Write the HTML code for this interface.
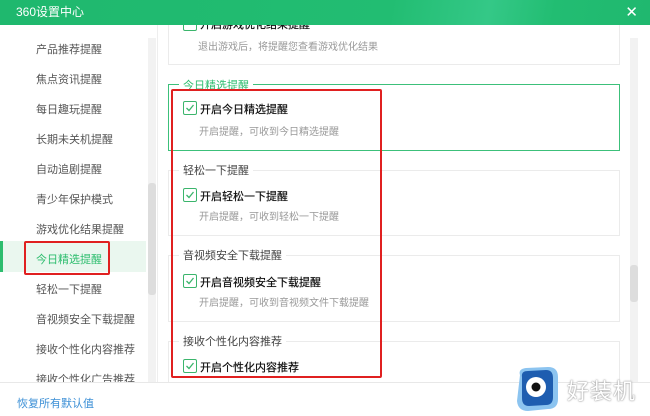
<!DOCTYPE html>
<html><head><meta charset="utf-8"><style>
*{margin:0;padding:0;box-sizing:border-box}
body{width:650px;height:416px;overflow:hidden;background:#fff;font-family:"Liberation Sans","Noto Sans CJK SC",sans-serif;position:relative}
.abs{position:absolute}
.title{left:0;top:0;width:650px;height:25px;background:linear-gradient(100deg,#1fb86e 0%,#22bd72 60%,#34c887 75%,#22bd72 85%,#20b86f 100%);color:#fff;font-size:12px;line-height:25px;padding-left:16px;z-index:5}
.side{font-size:11px;color:#555;left:36px}
.fs{border:1px solid #ebebeb;left:168px;width:452px}
.leg{font-size:11px;color:#444;background:#fff;padding:0 4px}
.cb{width:14px;height:14px;border:1px solid #3bb56c;border-radius:2px;background:#fff}
.cb svg{position:absolute;left:1px;top:1px}
.lbl{font-size:11px;color:#111;text-shadow:0 0 0.4px #111}
.desc{font-size:10px;color:#999}
</style></head><body>
<div class="abs title">360设置中心</div>
<div class="abs" style="right:12px;top:3px;color:#fff;font-size:15px;z-index:6">✕</div>
<div class="abs" style="left:0;top:25px;width:158px;height:357px;background:#fff;border-right:1px solid #eee"></div>
<div class="abs" style="left:148px;top:38px;width:8px;height:345px;background:#f2f2f2"></div>
<div class="abs" style="left:148px;top:183px;width:8px;height:112px;background:#ddd;border-radius:3px"></div>
<div class="abs" style="left:0;top:241px;width:146px;height:31px;background:#eaf7ef"></div>
<div class="abs" style="left:0;top:241px;width:3px;height:31px;background:#2dbd6e"></div>
<div class="abs side" style="top:41px">产品推荐提醒</div>
<div class="abs side" style="top:71px">焦点资讯提醒</div>
<div class="abs side" style="top:101px">每日趣玩提醒</div>
<div class="abs side" style="top:131px">长期未关机提醒</div>
<div class="abs side" style="top:161px">自动追剧提醒</div>
<div class="abs side" style="top:191px">青少年保护模式</div>
<div class="abs side" style="top:221px">游戏优化结果提醒</div>
<div class="abs side" style="top:251px;color:#2dbd6e">今日精选提醒</div>
<div class="abs side" style="top:281px">轻松一下提醒</div>
<div class="abs side" style="top:311px">音视频安全下载提醒</div>
<div class="abs side" style="top:341px">接收个性化内容推荐</div>
<div class="abs side" style="top:371px">接收个性化广告推荐</div>
<div class="abs" style="left:24px;top:241px;width:86px;height:34px;border:2px solid #e02020;border-radius:2px"></div>
<div class="abs" style="left:630px;top:38px;width:8px;height:345px;background:#f2f2f2"></div>
<div class="abs" style="left:630px;top:265px;width:8px;height:37px;background:#ddd;border-radius:3px"></div>
<div class="abs fs" style="top:15px;height:50px;border-top:none"></div>
<div class="abs cb" style="left:183px;top:17px"></div>
<div class="abs lbl" style="left:200px;top:16px">开启游戏优化结果提醒</div>
<div class="abs desc" style="left:198px;top:38px">退出游戏后，将提醒您查看游戏优化结果</div>
<div class="abs fs" style="top:84px;height:67px;border-color:#3cc07a"></div>
<div class="abs leg" style="left:179px;top:77px;color:#2dbd6e">今日精选提醒</div>
<div class="abs cb" style="left:183px;top:101px"><svg width="10" height="10"><path d="M1.5 5 L4 7.5 L8.5 2" fill="none" stroke="#3bb56c" stroke-width="1.3"/></svg></div>
<div class="abs lbl" style="left:200px;top:101px">开启今日精选提醒</div>
<div class="abs desc" style="left:199px;top:123px">开启提醒，可收到今日精选提醒</div>
<div class="abs fs" style="top:170px;height:66px"></div>
<div class="abs leg" style="left:179px;top:162px">轻松一下提醒</div>
<div class="abs cb" style="left:183px;top:188px"><svg width="10" height="10"><path d="M1.5 5 L4 7.5 L8.5 2" fill="none" stroke="#3bb56c" stroke-width="1.3"/></svg></div>
<div class="abs lbl" style="left:200px;top:188px">开启轻松一下提醒</div>
<div class="abs desc" style="left:199px;top:208px">开启提醒，可收到轻松一下提醒</div>
<div class="abs fs" style="top:255px;height:67px"></div>
<div class="abs leg" style="left:179px;top:247px">音视频安全下载提醒</div>
<div class="abs cb" style="left:183px;top:274px"><svg width="10" height="10"><path d="M1.5 5 L4 7.5 L8.5 2" fill="none" stroke="#3bb56c" stroke-width="1.3"/></svg></div>
<div class="abs lbl" style="left:200px;top:274px">开启音视频安全下载提醒</div>
<div class="abs desc" style="left:199px;top:294px">开启提醒，可收到音视频文件下载提醒</div>
<div class="abs fs" style="top:341px;height:42px;border-bottom:none"></div>
<div class="abs leg" style="left:179px;top:333px">接收个性化内容推荐</div>
<div class="abs cb" style="left:183px;top:359px"><svg width="10" height="10"><path d="M1.5 5 L4 7.5 L8.5 2" fill="none" stroke="#3bb56c" stroke-width="1.3"/></svg></div>
<div class="abs lbl" style="left:200px;top:359px">开启个性化内容推荐</div>
<div class="abs" style="left:171px;top:89px;width:211px;height:289px;border:2.5px solid #e02020;border-radius:2px"></div>
<div class="abs" style="left:0;top:382px;width:650px;height:34px;background:#fff;border-top:1px solid #e8e8e8"></div>
<div class="abs" style="left:17px;top:395px;font-size:11px;color:#3b8fd6">恢复所有默认值</div>
<svg class="abs" style="left:512px;top:365px" width="58" height="50">
<path d="M8 10 Q6 4 14 3 L36 2 Q46 2 46 12 L46 34 Q46 44 36 44 L16 46 Q6 46 5 36 Z" fill="#8cc4f0"/>
<path d="M10 12 Q9 6 16 6 L34 5 Q41 5 41 13 L41 32 Q41 40 34 40 L17 41 Q10 41 10 33 Z" fill="#1e5db0"/>
<circle cx="24" cy="22" r="10" fill="#fff"/>
<circle cx="24" cy="22" r="4.5" fill="#111"/>
</svg>
<div class="abs" style="left:567px;top:374px;font-size:22px;color:#fff;letter-spacing:1px;text-shadow:0 0 2px #999,0 0 1px #888">好装机</div>
</body></html>
